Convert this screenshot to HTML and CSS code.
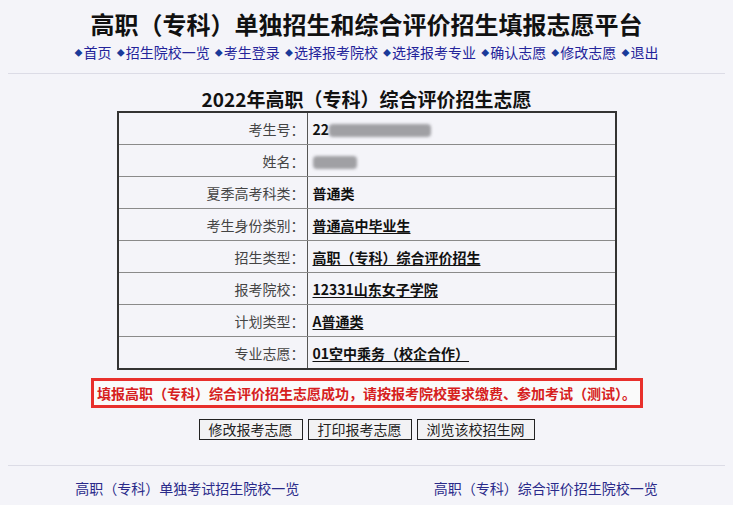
FILE: index.html
```html
<!DOCTYPE html>
<html lang="zh-CN">
<head>
  <meta charset="UTF-8">
  <title>高职（专科）单独招生和综合评价招生填报志愿平台</title>
  <link rel="stylesheet" href="styles.css">
</head>
<body>

  <h1 class="site-title">高职（专科）单独招生和综合评价招生填报志愿平台</h1>

  <div class="nav">
    <a href="#"><i>◆</i>首页</a>
    <a href="#"><i>◆</i>招生院校一览</a>
    <a href="#"><i>◆</i>考生登录</a>
    <a href="#"><i>◆</i>选择报考院校</a>
    <a href="#"><i>◆</i>选择报考专业</a>
    <a href="#"><i>◆</i>确认志愿</a>
    <a href="#"><i>◆</i>修改志愿</a>
    <a href="#"><i>◆</i>退出</a>
  </div>

  <hr class="line">

  <h2 class="form-title">2022年高职（专科）综合评价招生志愿</h2>

  <table class="info">
    <tr>
      <td class="label">考生号：</td>
      <td class="value">22<span class="blur blur-id"></span></td>
    </tr>
    <tr>
      <td class="label">姓名：</td>
      <td class="value"><span class="blur blur-name"></span></td>
    </tr>
    <tr>
      <td class="label">夏季高考科类：</td>
      <td class="value">普通类</td>
    </tr>
    <tr>
      <td class="label">考生身份类别：</td>
      <td class="value"><u>普通高中毕业生</u></td>
    </tr>
    <tr>
      <td class="label">招生类型：</td>
      <td class="value"><u>高职（专科）综合评价招生</u></td>
    </tr>
    <tr>
      <td class="label">报考院校：</td>
      <td class="value"><u>12331山东女子学院</u></td>
    </tr>
    <tr>
      <td class="label">计划类型：</td>
      <td class="value"><u>A普通类</u></td>
    </tr>
    <tr>
      <td class="label">专业志愿：</td>
      <td class="value"><u>01空中乘务（校企合作）</u></td>
    </tr>
  </table>

  <div class="notice">填报高职（专科）综合评价招生志愿成功，请按报考院校要求缴费、参加考试（测试）。</div>

  <div class="buttons">
    <button>修改报考志愿</button>
    <button>打印报考志愿</button>
    <button>浏览该校招生网</button>
  </div>

  <hr class="line bottom">

  <div class="footer">
    <a href="#">高职（专科）单独考试招生院校一览</a>
    <a href="#">高职（专科）综合评价招生院校一览</a>
  </div>

</body>
</html>
```

FILE: styles.css
```css
body {
  margin: 8px;
  background: #f4f4f9;
  font-family: "Noto Sans CJK SC", "Noto Sans", sans-serif;
  font-size: 14px;
  color: #111;
}

.site-title {
  margin: 0;
  height: 32px;
  font-size: 24px;
  line-height: 32px;
  text-align: center;
  color: #111;
}

.nav {
  height: 24px;
  line-height: 24px;
  text-align: center;
  font-size: 14px;
  overflow: hidden;
}

.nav a {
  color: #23239a;
  text-decoration: none;
  margin: 0 1px;
}

.nav i {
  font-style: normal;
  font-size: 8px;
  line-height: 0;
  color: #1a3a9a;
  vertical-align: 2px;
  margin-right: 1px;
}

.line {
  margin: 9px 0 0;
  border: none;
  border-top: 1px solid #dcdce6;
}

.form-title {
  margin: 13px 0 0;
  height: 24px;
  font-size: 19px;
  line-height: 24px;
  text-align: center;
}

.info {
  width: 500px;
  margin: 0 auto;
  border-collapse: collapse;
  border: 2px solid #333;
}

.info td {
  height: 31px;
  padding: 0;
  border: 1px solid #8a8a8a;
}

.info .label {
  width: 186px;
  padding-right: 2px;
  text-align: right;
  color: #444;
  border-right-color: #555;
}

.info .value {
  padding-left: 5px;
  font-weight: bold;
}

.info u {
  text-decoration-thickness: 1px;
  text-underline-offset: 2px;
}

.blur {
  display: inline-block;
  vertical-align: -2px;
  background: #a0a0a4;
  border-radius: 4px;
  filter: blur(1.5px);
}

.blur-id {
  width: 102px;
  height: 13px;
}

.blur-name {
  width: 44px;
  height: 13px;
}

.notice {
  width: 546px;
  margin: 8px auto 0;
  border: 3px solid #e8302c;
  background: #fafafa;
  color: #d62020;
  font-weight: bold;
  height: 24px;
  line-height: 24px;
  text-align: center;
}

.buttons {
  margin-top: 11px;
  display: flex;
  justify-content: center;
  gap: 5px;
}

.buttons button {
  height: 21px;
  padding: 0 9px;
  border: 1px solid #222;
  background: #f2f2f4;
  font-family: inherit;
  font-size: 14px;
  line-height: 19px;
  color: #222;
}

.line.bottom {
  margin-top: 25px;
}

.footer {
  display: grid;
  grid-template-columns: 1fr 1fr;
  margin-top: 12px;
  line-height: 20px;
  text-align: center;
}

.footer a {
  color: #2a2a8a;
  text-decoration: none;
}
```
